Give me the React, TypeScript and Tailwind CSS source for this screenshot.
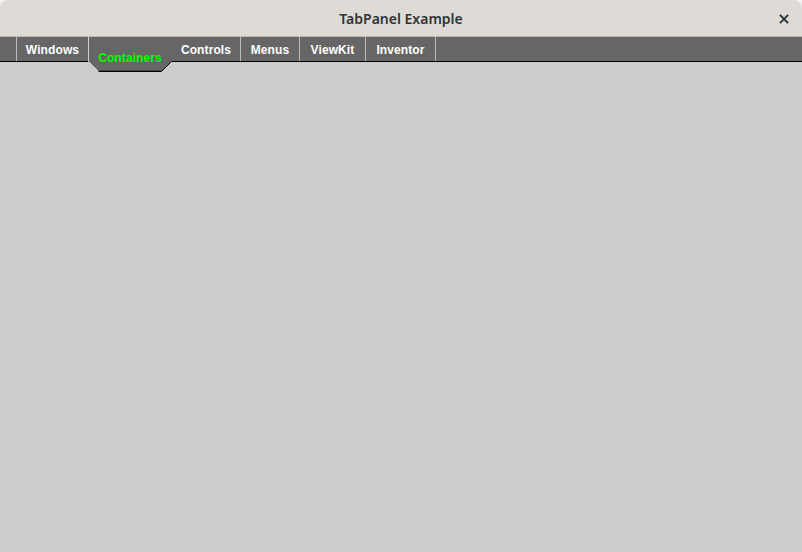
import React from "react";

const tabs = [
  { label: "Windows", w: 72 },
  { label: "Containers", w: 83, active: true },
  { label: "Controls", w: 69 },
  { label: "Menus", w: 59 },
  { label: "ViewKit", w: 66 },
  { label: "Inventor", w: 70 },
];

export default function App() {
  return (
    <div className="w-[802px] h-[552px] bg-[#f4f4f4] overflow-hidden">
      <div className="flex flex-col h-full rounded-t-[8px] overflow-hidden">
        <div className="relative h-[37px] shrink-0 bg-[#dedbd7] border-b border-[#bfb8b0] flex items-center justify-center">
          <span
            className="text-[14px] font-semibold text-[#2e3436] pt-[1px]"
            style={{ fontFamily: '"Noto Sans", "DejaVu Sans", sans-serif' }}
          >
            TabPanel Example
          </span>
          <svg
            className="absolute left-[779px] top-[14px]"
            width="10"
            height="10"
            viewBox="0 0 10 10"
          >
            <path d="M1.5 1.5 L8.5 8.5 M8.5 1.5 L1.5 8.5" stroke="#2e3436" strokeWidth="1.8" strokeLinecap="square" />
          </svg>
        </div>
        <div className="relative h-[25px] shrink-0 bg-[#666666] border-b border-black flex">
          <div className="w-[16px] h-full" />
          {tabs.map((t) =>
            t.active ? (
              <div
                key={t.label}
                className="relative h-full border-l border-[#bdbdbd]"
                style={{ width: t.w }}
              >
                <svg
                  className="absolute left-[-1px] top-0"
                  width="84"
                  height="35"
                  viewBox="0 0 84 35"
                >
                  <polygon points="0,0 84,0 84,24 74,34 10,34 0,24" fill="#666666" />
                  <path d="M0.5 0 L0.5 24.5 L10.5 34.5" stroke="#d0d0d0" strokeWidth="1" fill="none" />
                  <path d="M10.5 34.5 L73.5 34.5 L83.5 24.5" stroke="#000" strokeWidth="1" fill="none" />
                  <path d="M11 33.5 L73 33.5" stroke="#444" strokeWidth="1" fill="none" />
                </svg>
                <span
                  className="absolute left-0 right-0 top-[14px] text-center text-[12px] font-bold leading-[14px] text-[#00ff00] tracking-[0.1px]"
                  style={{ fontFamily: '"Liberation Sans", Arial, sans-serif' }}
                >
                  {t.label}
                </span>
              </div>
            ) : (
              <div
                key={t.label}
                className="h-full border-l border-[#bdbdbd] flex items-center justify-center pt-[1px]"
                style={{ width: t.w }}
              >
                <span
                  className="text-[12px] font-bold text-white leading-[14px] tracking-[0.1px]"
                  style={{ fontFamily: '"Liberation Sans", Arial, sans-serif' }}
                >
                  {t.label}
                </span>
              </div>
            )
          )}
          <div className="h-full border-l border-[#bdbdbd]" />
        </div>
        <div className="flex-1 bg-[#cccccc]" />
      </div>
    </div>
  );
}
